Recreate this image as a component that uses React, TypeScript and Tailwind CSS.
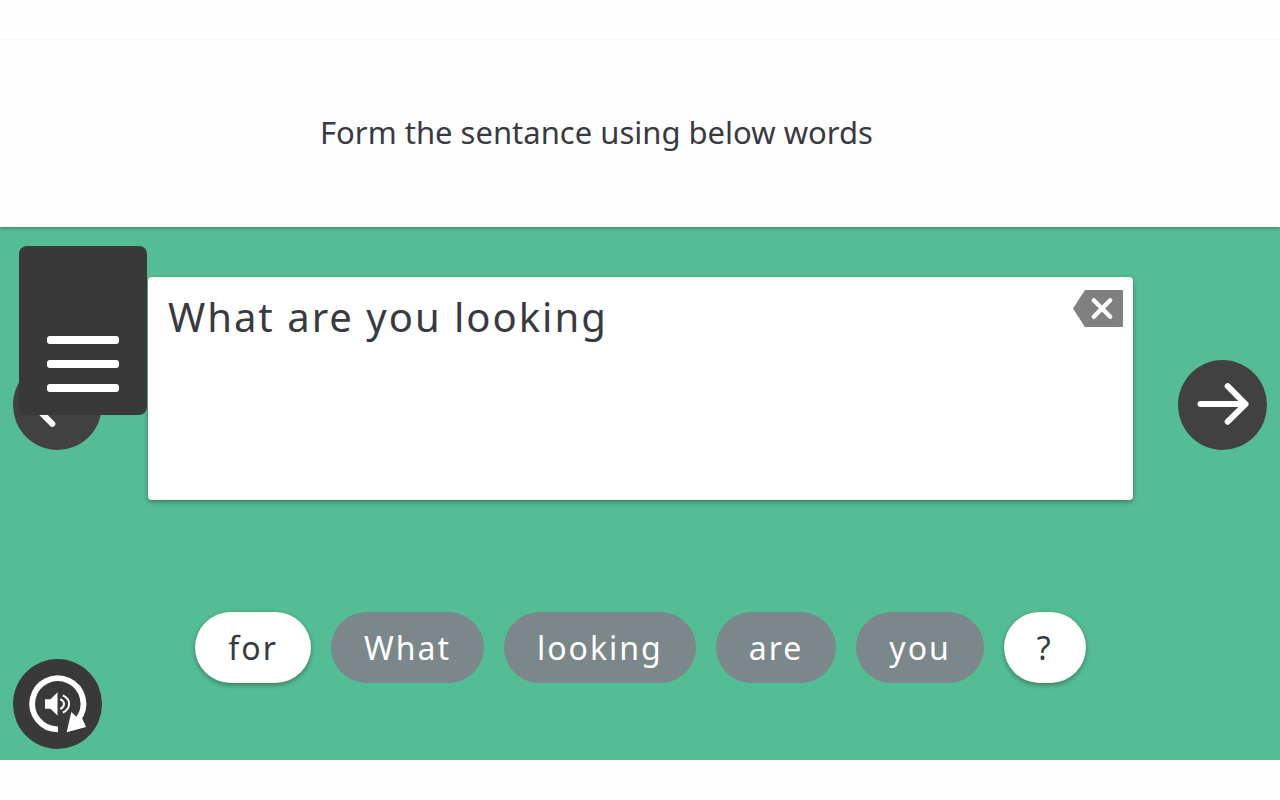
import { useState } from "react";

type Word = { text: string; used: boolean };

const initialWords: Word[] = [
  { text: "for", used: false },
  { text: "What", used: true },
  { text: "looking", used: true },
  { text: "are", used: true },
  { text: "you", used: true },
  { text: "?", used: false },
];

function ArrowIcon({ back = false }: { back?: boolean }) {
  return (
    <svg viewBox="0 0 89 90" className="block h-full w-full" aria-hidden="true">
      <ellipse cx="44.5" cy="45" rx="44.5" ry="45" fill="#414141" />
      <path
        d={back ? "M66.5 45.9H22.5M39.3 28.3L21.5 45.9L39.3 63.9" : "M22.5 44.1H66.5M49.7 26.1L67.5 44.1L49.7 61.7"}
        fill="none"
        stroke="#fff"
        strokeWidth="6"
        strokeLinecap="round"
        strokeLinejoin="round"
      />
    </svg>
  );
}

function ReplayIcon() {
  return (
    <svg viewBox="0 0 89 90" className="block h-full w-full" aria-hidden="true">
      <ellipse cx="44.5" cy="45" rx="44.5" ry="45" fill="#393939" />
      <path d="M45 70.4A25.6 25.6 0 1 1 65 60.5" fill="none" stroke="#fff" strokeWidth="5.8" />
      <path d="M58.3 53L64.5 58.8L69 59L73 68L53.7 73.2Z" fill="#fff" />
      <path d="M32 40.3H37.5L44.5 33.3V56.5L37.5 49.7H32Z" fill="#fff" />
      <path
        d="M47.3 40.2Q51 42 51 45T47.3 50.2M49.8 36.4Q56.1 39.4 56.1 45T49.8 53.6"
        fill="none"
        stroke="#fff"
        strokeWidth="2"
      />
    </svg>
  );
}

export default function App() {
  const [words, setWords] = useState(initialWords);
  const [sentence, setSentence] = useState(["What", "are", "you", "looking"]);

  const addWord = (word: Word) => {
    setWords(words.map((w) => (w === word ? { ...w, used: true } : w)));
    setSentence([...sentence, word.text]);
  };

  const removeLast = () => {
    const last = sentence[sentence.length - 1];
    setWords(words.map((w) => (w.text === last ? { ...w, used: false } : w)));
    setSentence(sentence.slice(0, -1));
  };

  return (
    <div className="flex min-h-screen flex-col bg-[#fefefe] pb-10 font-['Noto_Sans',sans-serif] text-[#373b41]">
      <div className="h-10 border-b border-[#fafafa]" />
      <header className="relative z-10 bg-[#fefefe] px-[25%] pt-[68px] pb-[71px] shadow-[0_2px_3px_rgba(0,0,0,0.2)]">
        <h1 className="text-[31px] leading-[48px]">Form the sentance using below words</h1>
      </header>

      <main className="relative flex flex-1 bg-[#54bd95]">
        <nav className="flex w-[148px] shrink-0 flex-col justify-between pt-[133px] pb-[11px] pl-[13px]">
          <button type="button" aria-label="Previous" className="h-[90px] w-[89px]">
            <ArrowIcon back />
          </button>
          <button type="button" aria-label="Replay audio" className="h-[90px] w-[89px]">
            <ReplayIcon />
          </button>
        </nav>

        <section className="flex min-w-0 flex-1 flex-col gap-28 pt-[50px] pb-19">
          <div className="flex min-h-[223px] items-start justify-between rounded-sm bg-white pr-[10px] pl-5 shadow-[0_2px_5px_rgba(0,0,0,0.35)]">
            <p className="pt-[10px] text-[40px] leading-[60px] tracking-wider">{sentence.join(" ")}</p>
            <button type="button" aria-label="Delete last word" onClick={removeLast} className="mt-[13px] h-[37px] w-[50px] shrink-0">
              <svg viewBox="0 0 50 37" className="block h-full w-full" aria-hidden="true">
                <path d="M12 0H49Q50 0 50 1V36Q50 37 49 37H12L0 18.5Z" fill="#808080" />
                <path d="M20.8 10.3L37.2 26.8M37.2 10.3L20.8 26.8" stroke="#fff" strokeWidth="4.4" strokeLinecap="round" />
              </svg>
            </button>
          </div>

          <div className="flex flex-wrap justify-center gap-5">
            {words.map((word) => (
              <button
                key={word.text}
                type="button"
                disabled={word.used}
                onClick={() => addWord(word)}
                className={
                  word.used
                    ? "rounded-[36px] bg-[#7c878a] px-[33px] py-3 text-[32px] leading-[47px] tracking-[2px] text-white"
                    : "rounded-[36px] bg-white px-[33px] py-3 text-[32px] leading-[47px] tracking-[2px] shadow-[0_2px_5px_rgba(0,0,0,0.35)]"
                }
              >
                {word.text}
              </button>
            ))}
          </div>
        </section>

        <nav className="w-[147px] shrink-0 pt-[133px] pl-[45px]">
          <button type="button" aria-label="Next" className="h-[90px] w-[89px]">
            <ArrowIcon />
          </button>
        </nav>

        <button
          type="button"
          aria-label="Menu"
          className="absolute top-[19px] left-[19px] flex h-[169px] w-32 flex-col items-center justify-end gap-4 rounded-lg bg-[#393939] pb-[23px]"
        >
          <span className="h-2 w-[72px] rounded-[3px] bg-white" />
          <span className="h-2 w-[72px] rounded-[3px] bg-white" />
          <span className="h-2 w-[72px] rounded-[3px] bg-white" />
        </button>
      </main>
    </div>
  );
}
